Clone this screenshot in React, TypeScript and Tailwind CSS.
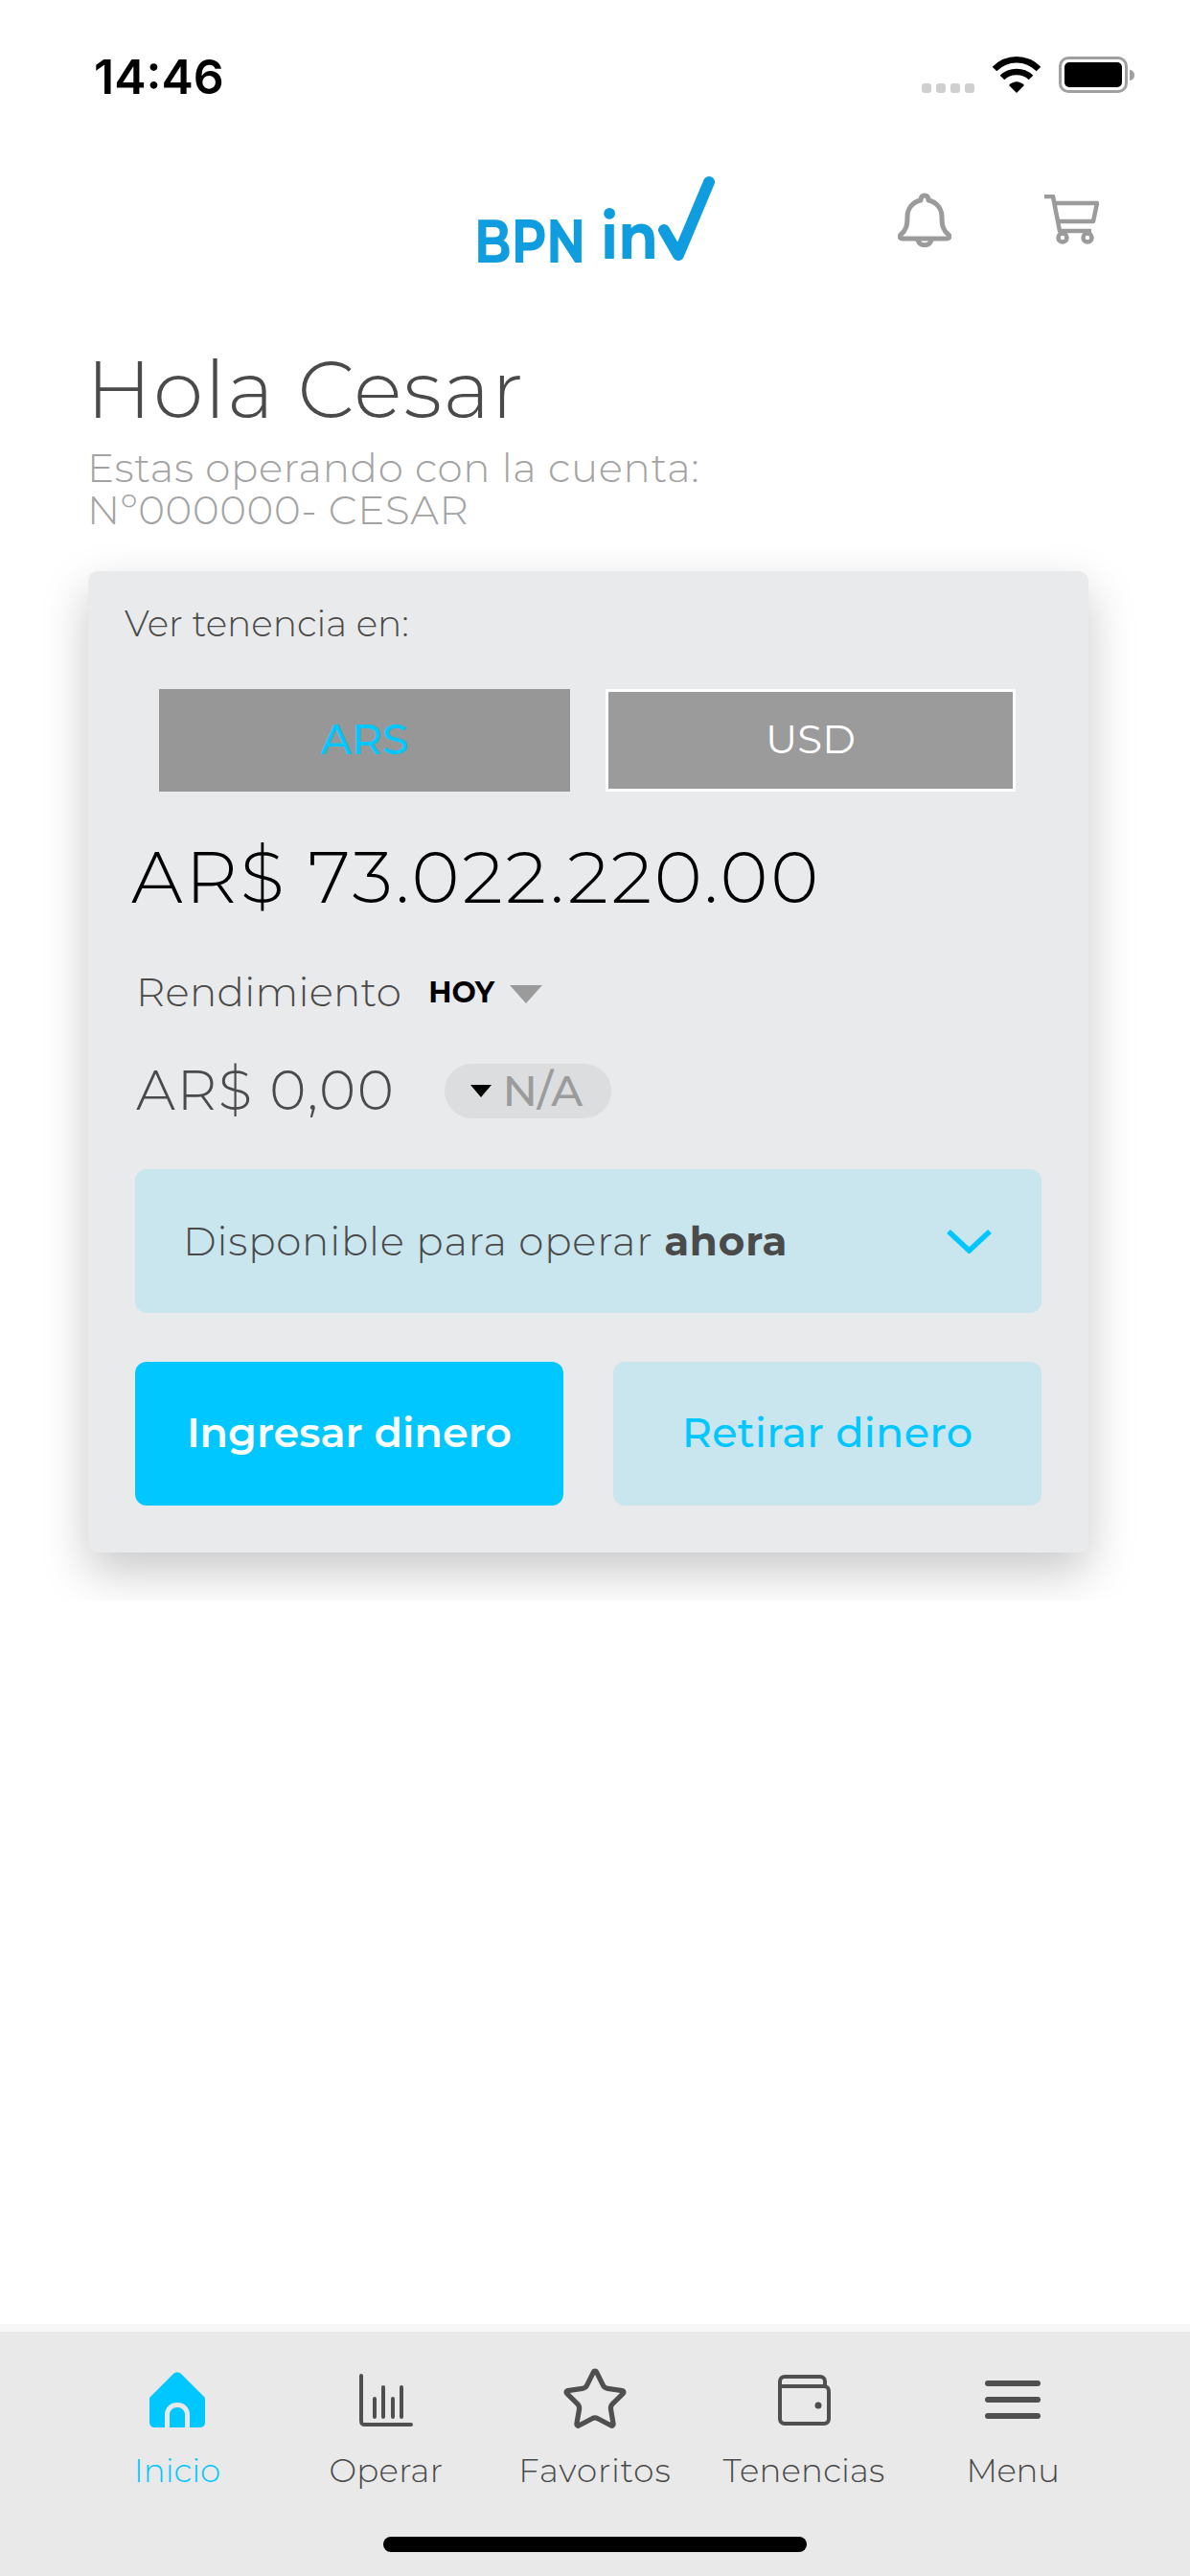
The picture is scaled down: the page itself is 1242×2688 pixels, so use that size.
import { Star } from "lucide-react";

function Logo() {
  return (
    <svg width="260" height="100" viewBox="0 0 260 100" fill="none" className="overflow-visible">
      <text x="5" y="94" fill="#0f9ddf" fontFamily="Montserrat, Noto Sans, sans-serif" fontWeight="700" fontSize="64" textLength="116" lengthAdjust="spacingAndGlyphs">BPN</text>
      <text x="137" y="90" fill="#0f9ddf" fontFamily="Montserrat, Noto Sans, sans-serif" fontWeight="700" fontSize="68" textLength="60" lengthAdjust="spacingAndGlyphs">in</text>
      <path d="M203 60L218 86L250 10" stroke="#0f9ddf" strokeWidth="12" strokeLinecap="round" strokeLinejoin="round" />
    </svg>
  );
}

function WifiIcon() {
  return (
    <svg width="52" height="39" viewBox="0 0 52 39" fill="none">
      <path d="M3 14C16 1 36 1 49 14" stroke="#000" strokeWidth="6.5" />
      <path d="M11 23C19 15 33 15 41 23" stroke="#000" strokeWidth="6.5" />
      <path d="M18 31C23 26 29 26 34 31L26 39Z" fill="#000" />
    </svg>
  );
}

function BatteryIcon() {
  return (
    <div className="mt-[1px] flex items-center">
      <div className="h-[38px] w-[72px] rounded-[10px] border-[3px] border-[#a0a0a0] p-[3px]">
        <div className="h-full w-full rounded-[5px] bg-black" />
      </div>
      <div className="ml-[2px] h-[11px] w-[5px] rounded-r-full bg-[#a0a0a0]" />
    </div>
  );
}

function NavItem({ label, active, children, className = "" }: { label: string; active?: boolean; children: React.ReactNode; className?: string }) {
  return (
    <div className="flex w-[218px] flex-col items-center">
      <div className="flex h-[70px] items-center justify-center">{children}</div>
      <span className={`mt-[18px] text-[34px] leading-[42px] font-light ${active ? "text-[#00c7ff]" : "text-[#4a4a4a]"} ${className}`}>{label}</span>
    </div>
  );
}

export default function App() {
  return (
    <div className="flex h-[2688px] w-[1242px] flex-col bg-white font-['Montserrat','Noto_Sans',sans-serif]">
      <div className="flex h-[150px] items-start justify-between pl-[98px] pr-[58px] pt-[58px]">
        <span className="-mt-[5px] font-['Inter',sans-serif] text-[50px] leading-[54px] font-semibold text-black">14:46</span>
        <div className="flex items-start gap-[18px]">
          <div className="mt-[29px] flex gap-[5px]">
            <span className="h-[10px] w-[10px] rounded-[3px] bg-[#cfcfcf]" />
            <span className="h-[10px] w-[10px] rounded-[3px] bg-[#cfcfcf]" />
            <span className="h-[10px] w-[10px] rounded-[3px] bg-[#cfcfcf]" />
            <span className="h-[10px] w-[10px] rounded-[3px] bg-[#cfcfcf]" />
          </div>
          <WifiIcon />
          <BatteryIcon />
        </div>
      </div>

      <div className="relative flex h-[208px] justify-center">
        <div className="-ml-[2px] pt-[30px]"><Logo /></div>
        <div className="absolute right-[95px] top-[51px] flex items-start gap-[96px]">
          <svg width="56" height="57" viewBox="0 0 56 57" fill="none" stroke="#9b9b9b" strokeWidth="5" strokeLinejoin="round">
            <path d="M28 3C25 3 24 5 24 8C15 10 10 17 10 25C10 34 9 39 3 44C1 46 2 48 5 48H51C54 48 55 46 53 44C47 39 46 34 46 25C46 17 41 10 32 8C32 5 31 3 28 3Z" />
            <path d="M21 48C21 57 35 57 35 48" />
          </svg>
          <svg width="58" height="52" viewBox="0 0 58 52" fill="none" stroke="#9b9b9b" strokeWidth="4.5" strokeLinejoin="round" className="mt-[2px]">
            <path d="M1 2H10L17 38H50" />
            <path d="M11 9H56L52 28H15" />
            <circle cx="20" cy="45" r="4.5" />
            <circle cx="46" cy="45" r="4.5" />
          </svg>
        </div>
      </div>

      <div>
        <h1 className="pl-[90px] text-[84px] leading-[96px] font-light tracking-[1.5px] text-[#4a4a4a]">Hola Cesar</h1>
        <p className="mt-[12px] pl-[91px] text-[42px] leading-[44px] font-light tracking-[0.7px] text-[#a3a3a3]">Estas operando con la cuenta:<br />Nº000000- CESAR</p>
      </div>

      <div className="overflow-hidden pb-[50px] pl-[92px] pt-[42px]">
        <div className="w-[1044px] rounded-[10px] bg-[#e9eaec] pb-[49px] pt-[33px] shadow-[0_20px_50px_rgba(0,0,0,0.22)]">
          <p className="pl-[38px] text-[37.5px] leading-[44px] font-light text-[#4a4a4a]">Ver tenencia en:</p>
          <div className="ml-[74px] mt-[46px] flex gap-[37px]">
            <div className="flex h-[107px] w-[429px] items-center justify-center bg-[#979797] pb-[3px] text-[44px] font-medium text-[#00c7ff]">ARS</div>
            <div className="flex h-[107px] w-[428px] items-center justify-center border-[3px] border-white bg-[#9b9b9b] pb-[3px] text-[42px] font-normal text-white">USD</div>
          </div>
          <p className="ml-[45px] mt-[45px] text-[76px] leading-[88px] font-light tracking-[2.6px] text-black">AR$ 73.022.220.00</p>
          <div className="ml-[50px] mt-[50px] flex items-center">
            <span className="text-[42px] leading-[52px] font-light tracking-[0.3px] text-[#4a4a4a]">Rendimiento</span>
            <span className="ml-[28px] text-[30px] font-bold text-black">HOY</span>
            <span className="ml-[16px] mt-[4px] h-0 w-0 border-x-[17px] border-t-[19px] border-x-transparent border-t-[#9b9b9b]" />
          </div>
          <div className="ml-[50px] mt-[44px] flex items-center">
            <span className="text-[58px] leading-[66px] font-light tracking-[1.6px] text-[#4a4a4a]">AR$ 0,00</span>
            <div className="ml-[51px] flex h-[57px] w-[174px] items-center gap-[12px] rounded-full bg-[#dcdddf] pl-[27px]">
              <span className="h-0 w-0 border-x-[11px] border-t-[13px] border-x-transparent border-t-black" />
              <span className="text-[45px] font-medium text-[#9b9b9b]">N/A</span>
            </div>
          </div>
          <div className="mx-[49px] mt-[49px] flex h-[150px] items-center justify-between rounded-[12px] bg-[#c9e5ee] pl-[50px] pr-[51px]">
            <span className="text-[42px] font-light tracking-[0.8px] text-[#4a4a4a]">Disponible para operar <b className="font-bold">ahora</b></span>
            <svg width="49" height="26" viewBox="0 0 49 26" fill="none" stroke="#00c7ff" strokeWidth="5.5"><path d="M3 3L24.5 23L46 3" /></svg>
          </div>
          <div className="mx-[49px] mt-[51px] flex gap-[52px]">
            <div className="flex h-[150px] flex-1 items-center justify-center rounded-[12px] bg-[#00c7ff] pb-[2px] text-[43px] font-semibold text-white">Ingresar dinero</div>
            <div className="flex h-[150px] flex-1 items-center justify-center rounded-[12px] bg-[#c9e5ee] pb-[2px] text-[43px] font-medium tracking-[0.3px] text-[#00c7ff]">Retirar dinero</div>
          </div>
        </div>
      </div>

      <div className="mt-auto flex h-[255px] flex-col bg-[#e9e9e9] shadow-[0_-8px_0_#f7f7f7]">
        <div className="flex justify-center pt-[36px]">
          <NavItem label="Inicio" active>
            <svg width="58" height="58" viewBox="0 0 58 58" fill="none">
              <path d="M25 2C27 0 31 0 33 2L56 25C57.500 26 58 27 58 29V52C58 56 56 58 52 58H6C2 58 0 56 0 52V29C0 27 .5 26 2 25Z" fill="#00c7ff" />
              <path d="M18.500 58V45C18.500 31 39.500 31 39.500 45V58" stroke="#e9e9e9" strokeWidth="5" />
            </svg>
          </NavItem>
          <NavItem label="Operar" className="tracking-[0.3px]">
            <svg width="56" height="55" viewBox="0 0 56 55" fill="none" stroke="#4f4f4f" strokeWidth="4" strokeLinecap="round">
              <path d="M2 2V49C2 52 3 53 6 53H54" />
              <path d="M16 26V45M25 14V45M35 26V45M44 14V45" />
            </svg>
          </NavItem>
          <NavItem label="Favoritos" className="tracking-[1px]">
            <Star size={72} strokeWidth={1.75} className="text-[#4f4f4f]" />
          </NavItem>
          <NavItem label="Tenencias" className="tracking-[0.2px]">
            <svg width="55" height="53" viewBox="0 0 55 53" fill="none" stroke="#4f4f4f" strokeWidth="4">
              <path d="M2 13V46C2 49 4 51 7 51H48C51 51 53 49 53 46V17C53 14 51 12 48 12H2" />
              <path d="M2 14V7C2 4 4 2 7 2H44C47 2 49 4 49 7V12" />
              <circle cx="42" cy="32" r="3.500" fill="#4f4f4f" stroke="none" />
            </svg>
          </NavItem>
          <NavItem label="Menu" className="tracking-[-0.3px]">
            <svg width="58" height="40" viewBox="0 0 58 40" fill="#4f4f4f">
              <rect y="0" width="58" height="6" rx="3" />
              <rect y="17" width="58" height="6" rx="3" />
              <rect y="34" width="58" height="6" rx="3" />
            </svg>
          </NavItem>
        </div>
        <div className="mx-auto mt-[48px] h-[16px] w-[442px] rounded-full bg-black" />
      </div>
    </div>
  );
}
